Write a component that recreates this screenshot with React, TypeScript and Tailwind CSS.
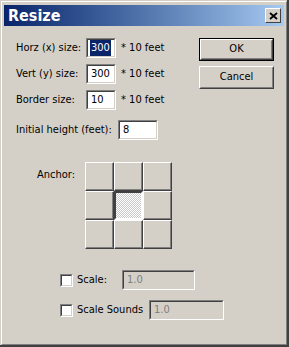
import React from "react";

const F = "font-['DejaVu_Sans_Condensed','DejaVu_Sans',sans-serif]";

function Sunken({ className = "", inner = "bg-white", children }: { className?: string; inner?: string; children?: React.ReactNode }) {
  return (
    <div className={`border border-t-[#808080] border-l-[#808080] border-b-white border-r-white ${className}`}>
      <div className={`w-full h-full border border-t-[#404040] border-l-[#404040] border-b-[#d4d0c8] border-r-[#d4d0c8] flex items-center ${inner}`}>
        {children}
      </div>
    </div>
  );
}

function Button({ label, def = false }: { label: string; def?: boolean }) {
  const btn = (
    <div className="w-full h-full border border-t-white border-l-white border-b-[#404040] border-r-[#404040]">
      <div className="w-full h-full border border-t-[#d4d0c8] border-l-[#d4d0c8] border-b-[#808080] border-r-[#808080] flex items-center justify-center text-[11px] text-black">
        {label}
      </div>
    </div>
  );
  return def ? (
    <div className="w-[75px] h-[23px] border border-black">{btn}</div>
  ) : (
    <div className="w-[75px] h-[23px]">{btn}</div>
  );
}

function Cell({ pressed = false }: { pressed?: boolean }) {
  if (pressed) {
    return (
      <div className="w-[29px] h-[29px] border-2 border-t-[#404040] border-l-[#404040] border-b-white border-r-white">
        <div className="w-full h-full bg-[repeating-conic-gradient(#ffffff_0_25%,#c8c8c8_0_50%)] bg-[length:2px_2px]" />
      </div>
    );
  }
  return (
    <div className="w-[29px] h-[29px] border border-t-white border-l-white border-b-[#404040] border-r-[#404040]">
      <div className="w-full h-full border-b border-r border-[#808080] bg-[#d4d0c8]" />
    </div>
  );
}

export default function App() {
  return (
    <div className={`w-[289px] h-[347px] bg-[#d4d0c8] pt-px pl-px border-r-2 border-b-2 border-[#404040] ${F} text-[11px] text-black`}>
      <div className="w-full h-full border border-t-white border-l-white border-r-[#808080] border-b-[#808080] pt-[3px] px-[2px] flex flex-col">
        {/* Title bar */}
        <div className="h-[21px] flex items-center justify-between bg-gradient-to-r from-[#0a246a] to-[#a6caf0] pl-[4px] pr-[3px]">
          <span className="text-white font-bold text-[16px] leading-none">Resize</span>
          <div className="w-[16px] h-[15px] bg-[#d4d0c8] border border-t-white border-l-white border-b-[#404040] border-r-[#404040] flex items-center justify-center">
            <svg width="9" height="8" viewBox="0 0 9 8">
              <path d="M1 1L8 7M8 1L1 7" stroke="#000" strokeWidth="1.8" />
            </svg>
          </div>
        </div>

        {/* Top section */}
        <div className="flex pt-[12px]">
          <div className="w-[195px] pl-[12px] flex flex-col">
            <div className="flex items-center h-[20px]">
              <span className="w-[70px]">Horz (x) size:</span>
              <Sunken className="w-[30px] h-[20px]">
                <span className="ml-[2px] bg-[#0a246a] text-white px-px">300</span>
              </Sunken>
              <span className="ml-[5px]">* 10 feet</span>
            </div>
            <div className="flex items-center h-[20px] mt-[6px]">
              <span className="w-[70px]">Vert (y) size:</span>
              <Sunken className="w-[30px] h-[20px]">
                <span className="ml-[3px]">300</span>
              </Sunken>
              <span className="ml-[5px]">* 10 feet</span>
            </div>
            <div className="flex items-center h-[20px] mt-[6px]">
              <span className="w-[70px]">Border size:</span>
              <Sunken className="w-[30px] h-[20px]">
                <span className="ml-[3px]">10</span>
              </Sunken>
              <span className="ml-[5px]">* 10 feet</span>
            </div>
            <div className="flex items-center h-[20px] mt-[10px]">
              <span className="w-[102px]">Initial height (feet):</span>
              <Sunken className="w-[40px] h-[20px]">
                <span className="ml-[3px]">8</span>
              </Sunken>
            </div>
          </div>
          <div className="flex flex-col gap-[5px]">
            <Button label="OK" def />
            <Button label="Cancel" />
          </div>
        </div>

        {/* Anchor */}
        <div className="flex items-start mt-[22px] pl-[33px]">
          <span className="w-[48px] mt-[5px]">Anchor:</span>
          <div className="grid grid-cols-3 w-[87px]">
            <Cell />
            <Cell />
            <Cell />
            <Cell />
            <Cell pressed />
            <Cell />
            <Cell />
            <Cell />
            <Cell />
          </div>
        </div>

        {/* Scale */}
        <div className="flex items-center mt-[21px] pl-[56px] h-[20px]">
          <Sunken className="w-[13px] h-[13px]" />
          <span className="ml-[4px] w-[45px]">Scale:</span>
          <Sunken className="w-[73px] h-[20px]" inner="bg-[#d4d0c8]">
            <span className="ml-[3px] text-[#808080]">1.0</span>
          </Sunken>
        </div>
        <div className="flex items-center mt-[10px] pl-[56px] h-[20px]">
          <Sunken className="w-[13px] h-[13px]" />
          <span className="ml-[4px] w-[72px]">Scale Sounds</span>
          <Sunken className="w-[75px] h-[20px]" inner="bg-[#d4d0c8]">
            <span className="ml-[3px] text-[#808080]">1.0</span>
          </Sunken>
        </div>
      </div>
    </div>
  );
}
